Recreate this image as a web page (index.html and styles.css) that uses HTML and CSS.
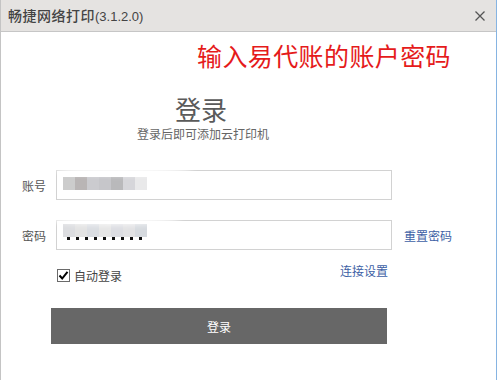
FILE: index.html
```html
<!DOCTYPE html>
<html lang="zh-CN">
<head>
<meta charset="utf-8">
<title>畅捷网络打印</title>
<link rel="stylesheet" href="styles.css">
</head>
<body>
<div class="window">
  <div class="titlebar">
    <span class="title">畅捷网络打印<span class="ver">(3.1.2.0)</span></span>
    <span class="close">
      <svg width="12" height="12" viewBox="0 0 12 12"><path d="M1.5 1.5 L10.5 10.5 M10.5 1.5 L1.5 10.5" stroke="#555" stroke-width="1.3" fill="none"/></svg>
    </span>
  </div>
  <div class="main">
    <div class="hint">输入易代账的账户密码</div>
    <div class="head">
      <div class="h1">登录</div>
      <div class="sub">登录后即可添加云打印机</div>
    </div>
    <div class="field first">
      <span class="label">账号</span>
      <div class="input">
        <div class="mosaic">
          <i style="background:#cccccc"></i><i style="background:#b9b5b5"></i><i style="background:#cbcbcf"></i><i style="background:#c6c6ca"></i><i style="background:#b9b9bb"></i><i style="background:#d6d6da"></i><i style="background:#e9e9ea"></i>
        </div>
      </div>
      <span class="smudge s1"></span>
    </div>
    <div class="field second">
      <span class="label">密码</span>
      <div class="input">
        <div class="mosaic light">
          <i style="background:#dcdde0"></i><i style="background:#e3e3e3"></i><i style="background:#dadde2"></i><i style="background:#e6e6e6"></i><i style="background:#dcdde2"></i><i style="background:#e2e2e4"></i><i style="background:#d6dadf"></i>
        </div>
        <div class="dots"><b></b><b></b><b></b><b></b><b></b><b></b><b></b><b></b><b></b></div>
      </div>
      <a class="link reset">重置密码</a>
      <span class="smudge s2"></span>
    </div>
    <div class="options">
      <label class="auto">
        <span class="cb"><svg width="11" height="11" viewBox="0 0 11 11"><path d="M1.5 5.5 L4.2 8.5 L9.5 1.8" stroke="#000" stroke-width="2" fill="none"/></svg></span>
        <span>自动登录</span>
      </label>
      <a class="link conn">连接设置</a>
    </div>
    <div class="btn">登录</div>
  </div>
</div>
</body>
</html>
```
FILE: styles.css
```css
* { box-sizing: border-box; }
html, body {
  margin: 0;
  padding: 0;
  background: #ffffff;
  width: 500px;
  height: 380px;
  overflow: hidden;
}
body {
  font-family: "Noto Sans CJK SC", "Liberation Sans", sans-serif;
  color: #555;
}
.window {
  width: 497px;
  height: 380px;
  border-left: 1px solid #c4c4c4;
  border-right: 1px solid #86b4e2;
  display: flex;
  flex-direction: column;
}
.titlebar {
  height: 32px;
  background: #e5e3e1;
  border-bottom: 1px solid #c6c6c6;
  display: flex;
  align-items: center;
  justify-content: space-between;
  padding: 0 10px 1px 7px;
}
.title {
  font-size: 14px;
  color: #444;
  letter-spacing: 0.5px;
  font-weight: 500;
}
.ver {
  font-family: "Liberation Sans", sans-serif;
  font-size: 13px;
  letter-spacing: 0;
  font-weight: normal;
}
.close { display: flex; margin-top: 1px; }
.main {
  display: flex;
  flex-direction: column;
  position: relative;
}
.hint {
  margin-top: 8px;
  height: 30px;
  line-height: 30px;
  padding-left: 196px;
  font-size: 25px;
  color: #e51b1b;
  letter-spacing: 0.4px;
}
.head {
  width: 400px;
  text-align: center;
  margin-top: 24px;
}
.h1 {
  font-size: 26px;
  line-height: 30px;
  color: #5a5a5a;
}
.sub {
  margin-top: 2px;
  font-size: 12px;
  line-height: 16px;
  color: #666;
  padding-left: 4px;
}
.field {
  display: flex;
  align-items: center;
  padding-left: 21px;
  position: relative;
}
.field.first { margin-top: 28px; }
.field.second { margin-top: 20px; }
.label {
  width: 34px;
  font-size: 12px;
  color: #555;
}
.input {
  width: 336px;
  height: 30px;
  border: 1px solid #d2d2d2;
  position: relative;
  padding: 6px 0 0 6px;
}
.mosaic {
  display: flex;
  height: 13px;
}
.mosaic i {
  display: block;
  width: 12px;
  height: 13px;
}
.second .mosaic { margin-top: -3px; }
.dots {
  display: flex;
  gap: 6px;
  padding-left: 4px;
  margin-top: 0;
}
.dots b {
  display: block;
  width: 3px;
  height: 3px;
  background: #111;
}
.link {
  font-size: 12px;
  color: #3d5fa5;
  cursor: pointer;
}
.reset { margin-left: 12px; }
.smudge {
  position: absolute;
  background: #ffffff;
  border-radius: 50%;
  filter: blur(3px);
}
.s1 { left: 52px; top: -8px; width: 140px; height: 12px; }
.s2 { left: 46px; top: -8px; width: 134px; height: 12px; }
.options {
  margin-top: 13px;
  margin-left: 56px;
  width: 331px;
  display: flex;
  justify-content: space-between;
  align-items: flex-start;
  height: 24px;
}
.auto {
  display: flex;
  align-items: center;
  gap: 4px;
  font-size: 12px;
  color: #444;
  margin-top: 4px;
}
.cb {
  width: 13px;
  height: 13px;
  border: 1px solid #6a6a6a;
  background: #fff;
  display: flex;
  align-items: center;
  justify-content: center;
}
.conn { line-height: 14px; margin-top: 1px; }
.btn {
  margin-top: 21px;
  margin-left: 50px;
  width: 336px;
  height: 36px;
  background: #676767;
  color: #ffffff;
  font-size: 12px;
  display: flex;
  align-items: center;
  justify-content: center;
}
```
